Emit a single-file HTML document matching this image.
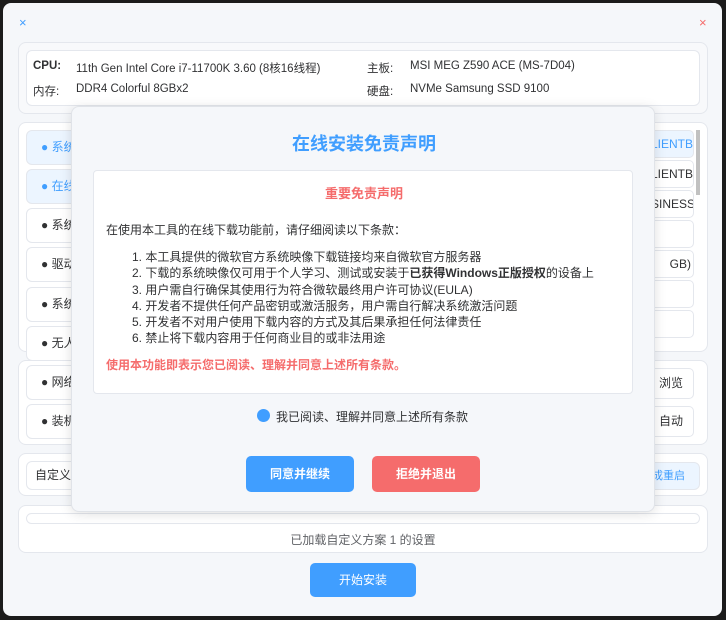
<!DOCTYPE html>
<html><head><meta charset="utf-8"><style>
*{box-sizing:border-box;margin:0;padding:0}
body{width:726px;height:620px;background:#1b1b1b;font-family:"Liberation Sans","Noto Sans CJK SC",sans-serif;font-size:12px;color:#303133;position:relative;overflow:hidden}
.win{position:absolute;left:3px;top:3px;width:719px;height:613px;background:#f5f7fa;border-radius:8px}
.a{position:absolute}
.hw{font-size:11.5px}
.panel{position:absolute;background:#f8f9fb;border:1px solid #e4e7ed;border-radius:8px}
.box{position:absolute;background:#fff;border:1px solid #e4e7ed;border-radius:6px}
.item{position:absolute;left:26px;width:60px;height:35px;background:#fff;border:1px solid #e4e7ed;border-radius:6px;padding-left:14px;line-height:33px;font-size:12px}
.item.sel{background:#ecf5ff;color:#409eff}
.ri{position:absolute;left:650px;width:44px;height:28px;background:#fff;border:1px solid #e4e7ed;border-radius:5px;line-height:26px;overflow:hidden;white-space:nowrap;font-size:12px;text-align:right;padding-right:2px}
.modal{position:absolute;left:71px;top:106px;width:584px;height:406px;background:#f5f7fa;border:1px solid #e0e3e8;border-radius:8px;box-shadow:0 2px 12px rgba(0,0,0,.12)}
.li{position:absolute;left:59px;font-size:12px;white-space:nowrap}
.btn{position:absolute;height:36px;width:108px;border-radius:5px;color:#fff;font-weight:bold;font-size:12px;text-align:center;line-height:36px}
</style></head><body>
<div class="win">
<div class="a" style="left:16px;top:12px;color:#409eff;font-size:13px">×</div>
<div class="a" style="left:696px;top:12px;color:#f56c6c;font-size:13px">×</div>
</div>
<div class="panel" style="left:18px;top:42px;width:690px;height:72px"></div>
<div class="box" style="left:26px;top:50px;width:674px;height:56px"></div>
<div class="a hw" style="left:33px;top:60px;font-weight:bold">CPU:</div>
<div class="a hw" style="left:76px;top:60px">11th Gen Intel Core i7-11700K 3.60 (8核16线程)</div>
<div class="a hw" style="left:33px;top:83px">内存:</div>
<div class="a hw" style="left:76px;top:83px">DDR4 Colorful 8GBx2</div>
<div class="a hw" style="left:367px;top:60px">主板:</div>
<div class="a hw" style="left:410px;top:60px">MSI MEG Z590 ACE (MS-7D04)</div>
<div class="a hw" style="left:367px;top:83px">硬盘:</div>
<div class="a hw" style="left:410px;top:83px">NVMe Samsung SSD 9100</div>

<div class="panel" style="left:18px;top:122px;width:690px;height:230px;background:#fff"></div>
<div class="panel" style="left:18px;top:360px;width:690px;height:85px;background:#fff"></div>
<div class="item sel" style="top:130px">● 系统</div>
<div class="item sel" style="top:169px">● 在线</div>
<div class="item" style="top:208px">● 系统</div>
<div class="item" style="top:247px">● 驱动</div>
<div class="item" style="top:287px">● 系统</div>
<div class="item" style="top:326px">● 无人</div>
<div class="item" style="top:365px">● 网络</div>
<div class="item" style="top:404px">● 装机</div>
<div class="ri" style="top:130px;background:#ecf5ff;color:#409eff">LIENTB</div>
<div class="ri" style="top:160px">LIENTB</div>
<div class="ri" style="top:190px">SINESS</div>
<div class="ri" style="top:220px"></div>
<div class="ri" style="top:250px">GB)</div>
<div class="ri" style="top:280px"></div>
<div class="ri" style="top:310px"></div>
<div class="a" style="left:696px;top:130px;width:4px;height:65px;background:#c1c1c1"></div>
<div class="ri" style="top:368px;height:31px;text-align:center;line-height:29px">浏览</div>
<div class="ri" style="top:406px;height:31px;text-align:center;line-height:29px">自动</div>

<div class="panel" style="left:18px;top:453px;width:690px;height:43px;background:#fff"></div>
<div class="box" style="left:26px;top:461px;width:200px;height:29px;padding-left:8px;line-height:27px">自定义</div>
<div class="box" style="left:640px;top:462px;width:60px;height:28px;background:#ecf5ff;color:#409eff;line-height:26px;text-align:right;padding-right:14px;font-size:11px">成重启</div>

<div class="panel" style="left:18px;top:505px;width:690px;height:48px;background:#fff"></div>
<div class="a" style="left:26px;top:513px;width:674px;height:11px;border:1px solid #e4e7ed;border-radius:6px;background:#fff"></div>
<div class="a" style="left:0;width:726px;top:531px;text-align:center;color:#606266">已加载自定义方案 1 的设置</div>
<div class="btn" style="left:310px;top:563px;width:106px;height:34px;line-height:34px;background:#409eff;font-weight:normal">开始安装</div>

<div class="modal">
<div class="a" style="left:0;width:584px;top:23px;text-align:center;color:#409eff;font-size:18px;font-weight:bold">在线安装免责声明</div>
<div class="box" style="left:21px;top:63px;width:540px;height:224px;border-radius:4px">
<div class="a" style="left:0;width:540px;top:12px;text-align:center;color:#f56c6c;font-weight:bold;font-size:13px">重要免责声明</div>
<div class="a" style="left:12px;top:50px">在使用本工具的在线下载功能前，请仔细阅读以下条款：</div>
<div class="li" style="top:77px;left:38px">1. 本工具提供的微软官方系统映像下载链接均来自微软官方服务器</div>
<div class="li" style="top:93px;left:38px">2. 下载的系统映像仅可用于个人学习、测试或安装于<b>已获得Windows正版授权</b>的设备上</div>
<div class="li" style="top:110px;left:38px">3. 用户需自行确保其使用行为符合微软最终用户许可协议(EULA)</div>
<div class="li" style="top:126px;left:38px">4. 开发者不提供任何产品密钥或激活服务，用户需自行解决系统激活问题</div>
<div class="li" style="top:142px;left:38px">5. 开发者不对用户使用下载内容的方式及其后果承担任何法律责任</div>
<div class="li" style="top:158px;left:38px">6. 禁止将下载内容用于任何商业目的或非法用途</div>
<div class="a" style="left:12px;top:185px;color:#f56c6c;font-weight:bold">使用本功能即表示您已阅读、理解并同意上述所有条款。</div>
</div>
<div class="a" style="left:185px;top:302px;width:13px;height:13px;border-radius:50%;background:#409eff"></div>
<div class="a" style="left:204px;top:301px">我已阅读、理解并同意上述所有条款</div>
<div class="btn" style="left:174px;top:349px;background:#409eff">同意并继续</div>
<div class="btn" style="left:300px;top:349px;background:#f56c6c">拒绝并退出</div>
</div>
</body></html>
